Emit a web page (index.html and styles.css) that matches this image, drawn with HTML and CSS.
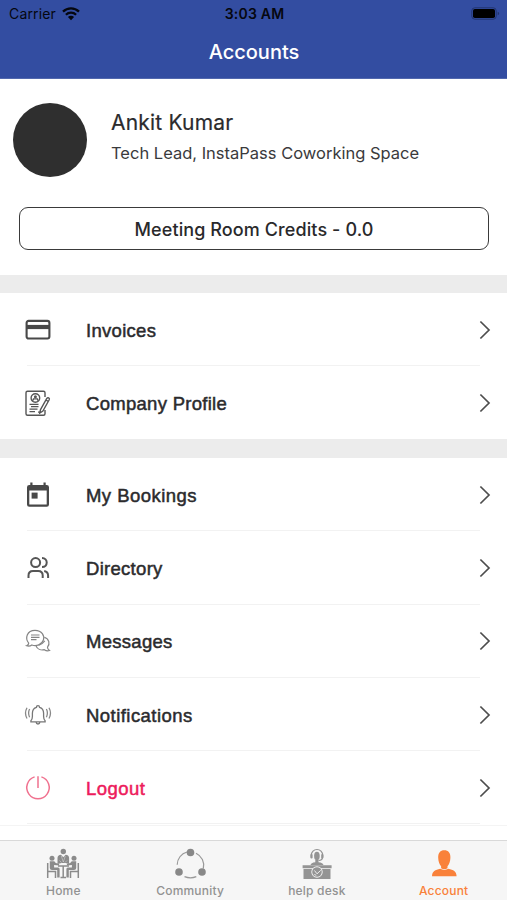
FILE: index.html
```html
<!DOCTYPE html>
<html lang="en">

<head>
  <meta charset="UTF-8">
  <meta name="viewport" content="width=device-width, initial-scale=1.0">
  <title>Accounts</title>
  <link rel="stylesheet" href="styles.css">
</head>

<body>
  <div class="app">
    <header>
      <div class="status-bar">
        <div class="carrier">
          <span>Carrier</span>
          <svg width="18" height="14" viewBox="0 0 18 14">
            <path d="M1 4.7a11.5 11.5 0 0 1 16 0M3.9 7.8a7.3 7.3 0 0 1 10.2 0" fill="none" stroke="#05070f" stroke-width="2.3" />
            <path d="M9 13.2L5.900 10.100a4.400 4.400 0 0 1 6.200 0z" fill="#05070f" />
          </svg>
        </div>
        <div class="time">3:03 AM</div>
        <svg class="battery" width="29" height="13" viewBox="0 0 29 13">
          <rect x=".8" y=".8" width="24.4" height="11.4" rx="3" fill="none" stroke="#22346f" stroke-width="1" />
          <rect x="2" y="2" width="22" height="9" rx="1.8" fill="#000" />
          <path d="M26.7 4.8v3.4q1.5-.5 1.5-1.7t-1.5-1.7z" fill="#22346f" />
        </svg>
      </div>
      <h1>Accounts</h1>
    </header>

    <section class="profile">
      <div class="user">
        <div class="avatar"></div>
        <div class="user-info">
          <h2>Ankit Kumar</h2>
          <p>Tech Lead, InstaPass Coworking Space</p>
        </div>
      </div>
      <button class="credits">Meeting Room Credits - 0.0</button>
    </section>

    <section class="menu menu-company">
      <a class="menu-item">
        <svg class="icon" viewBox="0 0 28 28" fill="none" stroke="#484848">
          <rect x="2.6" y="4.9" width="22.8" height="17.6" rx="2" stroke-width="2.1" />
          <path d="M3 11h22" stroke-width="4.2" />
        </svg>
        <span>Invoices</span>
        <svg class="chevron" viewBox="0 0 12 20"><path d="M1.4 1.5L10 10l-8.6 8.5" /></svg>
      </a>
      <a class="menu-item">
        <svg class="icon" viewBox="0 0 28 28" fill="none" stroke="#555" stroke-width="1.4">
          <path d="M21 8V3.8q0-1.500-1.500-1.500H3.500Q2 2.300 2 3.800v21q0 1.500 1.500 1.500h16q1.500 0 1.500-1.500V21" />
          <circle cx="11.4" cy="9" r="4.3" />
          <circle cx="11.4" cy="7.7" r="1.5" fill="#555" stroke="none" />
          <path d="M8.500 12l1-2.100h3.800l1 2.100" />
          <path d="M5.500 15.400h9M7 17.700h7.500M5.500 20.200h8M5.500 22.700h5.500M14 23.200h3" stroke-width="1.3" />
          <path d="M16.500 20.600l6.300-11.200q.8-1.100 1.900-.5t.5 1.900L18.900 22l-3.100 2zM21.800 11l2.500 1.400" />
        </svg>
        <span>Company Profile</span>
        <svg class="chevron" viewBox="0 0 12 20"><path d="M1.4 1.5L10 10l-8.6 8.5" /></svg>
      </a>
    </section>

    <section class="menu menu-user">
      <a class="menu-item">
        <svg class="icon" viewBox="0 0 28 28" fill="#484848">
          <path fill-rule="evenodd" d="M5.300 4h1V1.500h2.200V4h11V1.500h2.200V4h1q2.300 0 2.300 2.200v17.300q0 2.200-2.300 2.200H5.300Q3 25.700 3 23.500V6.200Q3 4 5.300 4zM5.300 9.500v14h17.400v-14z" />
          <rect x="7.6" y="11.6" width="6" height="6" />
        </svg>
        <span class="spaced">My Bookings</span>
        <svg class="chevron" viewBox="0 0 12 20"><path d="M1.4 1.5L10 10l-8.6 8.5" /></svg>
      </a>
      <a class="menu-item">
        <svg class="icon" viewBox="0 0 28 28" fill="none" stroke="#555" stroke-width="2">
          <circle cx="11.6" cy="8.6" r="4.5" />
          <path d="M18 4.100c6.300 0 6.300 9 0 9M4.500 24v-2.500q0-4.500 4.500-4.500h5.200q4.500 0 4.500 4.500V24M20.200 17q3.900.8 3.900 4.500V24" />
        </svg>
        <span>Directory</span>
        <svg class="chevron" viewBox="0 0 12 20"><path d="M1.4 1.5L10 10l-8.6 8.5" /></svg>
      </a>
      <a class="menu-item">
        <svg class="icon" viewBox="0 0 28 28" fill="none" stroke="#858585" stroke-width="1.2">
          <path d="M2.600 18.800q2-.8 2.100-2.700C.7 11.500 2.800 3.300 11 3.300c7 0 9.800 5.800 8.400 9.700-1.500 4.400-6.900 6.700-11.500 5-1.500 1.100-3.300 1.500-5.300.8z" />
          <path d="M7 8h8.500M7 10.300h8.500M7 12.600h5.500" />
          <path d="M20.300 10.200c5.100 1.600 5.800 7 3.200 10 0 1.700.7 2.500 2 3.300-2 .8-3.600.3-5.200-.8-3.600.8-7.100-.7-8.200-3.700" />
          <path d="M14.500 18.300q3.500-.9 6.300-4.500" />
        </svg>
        <span>Messages</span>
        <svg class="chevron" viewBox="0 0 12 20"><path d="M1.4 1.5L10 10l-8.6 8.5" /></svg>
      </a>
      <a class="menu-item">
        <svg class="icon" viewBox="0 0 28 28" fill="none" stroke="#777" stroke-width="1.3">
          <path d="M12.500 6.300q0-1.700 1.500-1.700t1.500 1.700c3 .8 4.100 3 4.100 6v3.300q0 2.700 1.500 4.100v1.100H6.900v-1.100q1.500-1.400 1.500-4.100v-3.300c0-3 1.100-5.200 4.100-6zM12 21q.3 2 2 2t2-2" />
          <path d="M5.600 8q-2 4 0 8.200M3 6.700q-3 5.400 0 10.800M22.400 8q2 4 0 8.200M25 6.700q3 5.400 0 10.800" stroke="#888" />
        </svg>
        <span class="spaced">Notifications</span>
        <svg class="chevron" viewBox="0 0 12 20"><path d="M1.4 1.5L10 10l-8.6 8.5" /></svg>
      </a>
      <a class="menu-item logout">
        <svg class="icon" viewBox="0 0 28 28" fill="none" stroke="#f0718f" stroke-width="1.5">
          <path d="M10.600 2.900a11.200 11.200 0 1 0 6.800 0M14 2.200V14" />
        </svg>
        <span class="spaced">Logout</span>
        <svg class="chevron" viewBox="0 0 12 20"><path d="M1.4 1.5L10 10l-8.6 8.5" /></svg>
      </a>
    </section>

    <nav class="tab-bar">
      <a class="tab">
        <svg width="34" height="34" viewBox="0 0 34 34" fill="#8b8b8b">
          <circle cx="17.3" cy="4.5" r="2.7" />
          <path d="M11.500 17V11q0-3 3.500-3.200l2.300 2.500 2.300-2.500q3.500.2 3.500 3.200v6l-3.500-1h-4z" />
          <circle cx="6" cy="11.3" r="2.5" />
          <circle cx="28" cy="11.3" r="2.5" />
          <path d="M3.800 14.300h4q1.400 0 1.800 1.800l3.500.7v1.700l-5-.4v2.500h4q1.500 0 1.500 1.500v8.500h-2.400V23H6q-2.200 0-2.200-2zM30.200 14.300h-4q-1.400 0-1.800 1.800l-3.500.7v1.700l5-.4v2.500h-4q-1.500 0-1.500 1.500v8.500h2.400V23H28q2.200 0 2.200-2z" />
          <path d="M1.700 16v15M1.700 24.500h7.800V31M32.300 16v15M32.300 24.500h-7.800V31M12 19h11M17.200 19v11.300M14.500 30.500h5.500" fill="none" stroke="#8b8b8b" stroke-width="1.5" />
          <path d="M15.300 9l2 6 2-6M13.500 13.500l2 2M21 13.500l-2 2" fill="none" stroke="#f6f6f6" stroke-width=".4" />
        </svg>
        <span>Home</span>
      </a>
      <a class="tab">
        <svg width="34" height="34" viewBox="0 0 34 34" fill="none" stroke="#999" stroke-width="1.2">
          <path d="M4.200 17.800A13.300 13.300 0 0 1 14 5M23 6.200a13.300 13.300 0 0 1 7.300 15.300M11.500 29.600q6 2.400 11.800 0" />
          <g fill="#888" stroke="none">
            <circle cx="17.5" cy="5.5" r="3.8" />
            <circle cx="6" cy="25" r="3.8" />
            <circle cx="29" cy="25" r="3.8" />
          </g>
        </svg>
        <span>Community</span>
      </a>
      <a class="tab">
        <svg width="34" height="34" viewBox="0 0 34 34" fill="#949494">
          <ellipse cx="16.9" cy="9" rx="2.8" ry="4.3" />
          <path d="M11.300 10.500V8.200a5.700 5.700 0 0 1 11.400 0v2.300M22.600 9.500q0 4-4 4" fill="none" stroke="#949494" stroke-width="1.2" />
          <rect x="10.4" y="7" width="2.2" height="4.5" rx="1" />
          <rect x="21.2" y="7" width="2.2" height="4.5" rx="1" />
          <path d="M15.300 13h3.200v2.300q4.500.5 5 2.700h-13q.5-2.200 4.800-2.700zM2.600 18.200h29v3h-29zM3.500 22h27v10h-27z" />
          <circle cx="17" cy="25" r="5.7" fill="#f6f6f6" />
          <circle cx="17" cy="25" r="4.8" />
          <path d="M14.500 23.500l2.500 3.300 3.800-3.500M14.300 27.500l2 .8" fill="none" stroke="#f6f6f6" stroke-width=".9" />
        </svg>
        <span>help desk</span>
      </a>
      <a class="tab active">
        <svg width="34" height="34" viewBox="0 0 34 34" fill="#f9813a">
          <path d="M17.300 3.200c4 0 6.300 2.600 6.100 7.600-.1 4-1.300 6.500-2.900 8.500v2q-3.200 2.100-6.400 0v-2c-1.600-2-2.800-4.500-2.900-8.500-.2-5 2.100-7.600 6.100-7.600z" />
          <path d="M13.200 21.800q4.100 2.300 8.200 0c5 1 8 2.500 8.200 7.500H5c.2-5 3.200-6.500 8.200-7.500z" />
        </svg>
        <span>Account</span>
      </a>
    </nav>
  </div>
</body>

</html>
```
FILE: styles.css
```css
* {
  box-sizing: border-box;
}

body {
  margin: 0;
  background-color: #fff;
  color: #2b2b2d;
  font-family: Inter, "Liberation Sans", sans-serif;
}

h1,
h2,
p {
  margin: 0;
}

.app {
  height: 900px;
  display: flex;
  flex-direction: column;
  overflow: hidden;
}

header {
  flex: none;
  height: 79px;
  background-color: #334da1;
  border-bottom: 1px solid #5268ad;
}

.status-bar {
  height: 27px;
  padding: 0 7px 0 9px;
  display: grid;
  grid-template-columns: 1fr auto 1fr;
  align-items: center;
  color: #05070f;
}

.carrier {
  display: flex;
  align-items: center;
  gap: 6px;
  font-size: 14px;
  letter-spacing: 0.15px;
}

.time {
  font-size: 14px;
  font-weight: 600;
  letter-spacing: 0.2px;
}

.battery {
  justify-self: end;
}

header h1 {
  padding-left: 1px;
  color: #fff;
  font-size: 20px;
  font-weight: 500;
  line-height: 51px;
  text-align: center;
}

.profile {
  flex: none;
  height: 196px;
  padding: 24px 18px 0 19px;
}

.user {
  height: 74px;
  margin-left: -6px;
  display: flex;
  gap: 24px;
}

.avatar {
  width: 74px;
  height: 74px;
  border-radius: 50%;
  background-color: #2f2f2f;
}

.user-info {
  padding-top: 6px;
}

.user-info h2 {
  font-size: 21px;
  font-weight: 400;
  letter-spacing: 0.2px;
  line-height: 28px;
  -webkit-text-stroke: 0.2px currentColor;
}

.user-info p {
  padding-top: 4px;
  color: #3a3a3c;
  font-size: 16.5px;
  line-height: 24px;
}

.credits {
  width: 100%;
  height: 43px;
  margin-top: 30px;
  padding: 2px 0 0;
  display: block;
  background-color: #fff;
  border: 1.5px solid #3a3a3a;
  border-radius: 9px;
  color: #29292b;
  font-family: inherit;
  font-size: 18px;
  font-weight: 500;
  letter-spacing: 0.1px;
}

.menu {
  flex: none;
  border-top: 18px solid #ececec;
}

.menu-company {
  height: 164px;
}

.menu-user {
  height: 387px;
  border-top-width: 19px;
  border-bottom: 1px solid #f4f4f4;
}

.menu-item {
  position: relative;
  height: 73.3px;
  padding: 0 16px 0 24px;
  display: flex;
  align-items: center;
  font-family: "Liberation Sans", Arial, sans-serif;
  font-size: 18.5px;
  letter-spacing: 0.29px;
  -webkit-text-stroke: 0.5px currentColor;
}

.menu-item span {
  padding-top: 2px;
}

.menu-item .spaced {
  letter-spacing: 0.46px;
}

.menu-item::after {
  content: "";
  position: absolute;
  right: 27px;
  bottom: 0;
  left: 27px;
  height: 1px;
  background-color: #f2f2f2;
}

.menu-company .menu-item:last-child::after {
  display: none;
}

.icon {
  width: 28px;
  height: 28px;
  margin-right: 34px;
}

.chevron {
  width: 12px;
  height: 20px;
  margin-left: auto;
  fill: none;
  stroke: #4d4d4d;
  stroke-width: 1.7;
}

.logout {
  color: #ed1b5b;
}

.tab-bar {
  flex: none;
  height: 60px;
  margin-top: auto;
  padding-top: 6px;
  display: grid;
  grid-template-columns: repeat(4, 1fr);
  background-color: #f6f6f6;
  border-top: 1px solid #d9d9d9;
}

.tab {
  display: flex;
  flex-direction: column;
  align-items: center;
  color: #929292;
  font-size: 12px;
  font-weight: 500;
  letter-spacing: 0.2px;
}

.tab span {
  line-height: 19px;
}

.tab.active {
  color: #f9813a;
}
```
